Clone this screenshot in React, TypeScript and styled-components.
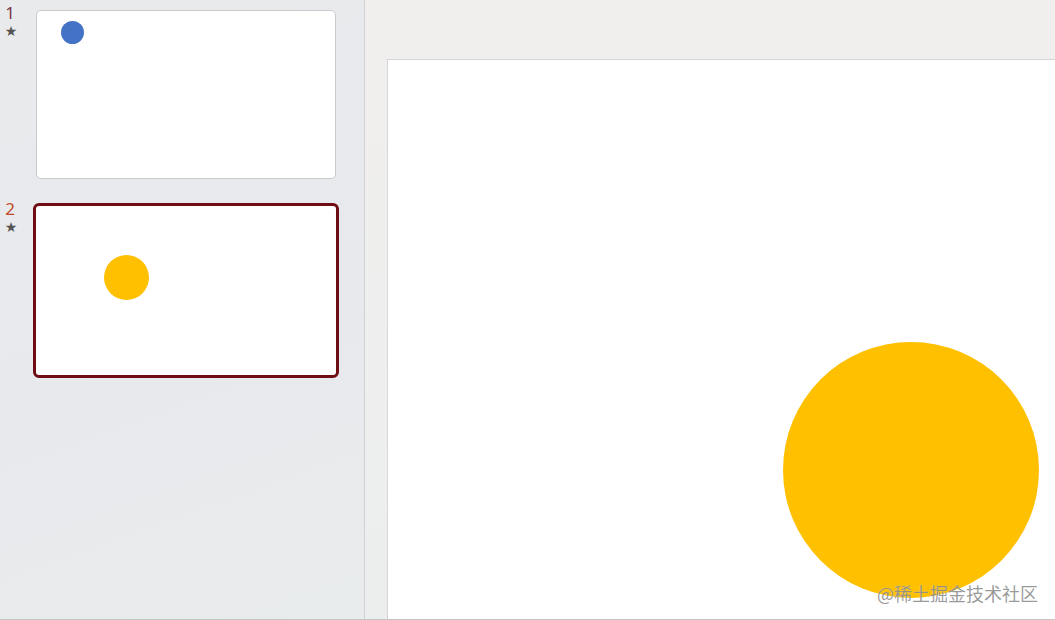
import styled, { createGlobalStyle } from "styled-components";

const GlobalStyle = createGlobalStyle`
  html, body {
    margin: 0;
    padding: 0;
    width: 1055px;
    height: 620px;
    overflow: hidden;
    font-family: "Noto Sans", "Open Sans", sans-serif;
  }
`;

const slides = [
  { id: 1, circle: { x: 35, y: 21, r: 11.5, color: "#4472c4" } },
  { id: 2, circle: { x: 90, y: 71, r: 22.5, color: "#ffc000" } },
];

const App = () => {
  const current = 2;
  return (
    <>
      <GlobalStyle />
      <Window>
        <Panel>
          {slides.map((s) => (
            <SlideRow key={s.id}>
              <Meta>
                <SlideNumber $active={s.id === current}>{s.id}</SlideNumber>
                <Star>★</Star>
              </Meta>
              <Thumb $active={s.id === current}>
                <Dot
                  $x={s.circle.x}
                  $y={s.circle.y}
                  $r={s.circle.r}
                  $color={s.circle.color}
                />
              </Thumb>
            </SlideRow>
          ))}
        </Panel>
        <Stage>
          <Slide>
            <BigCircle />
          </Slide>
        </Stage>
        <Watermark>@稀土掘金技术社区</Watermark>
      </Window>
    </>
  );
};

export default App;

const Window = styled.div`
  position: relative;
  display: flex;
  width: 1055px;
  height: 620px;
  box-sizing: border-box;
  border-bottom: 1px solid #c4c4c4;
  overflow: hidden;
`;

const Panel = styled.div`
  display: flex;
  flex-direction: column;
  gap: 21px;
  width: 365px;
  padding-top: 7px;
  box-sizing: border-box;
  background: linear-gradient(160deg, #e8eaec 0%, #e8e9ed 60%, #e9ecec 100%);
  border-right: 1px solid #cfd1d3;
`;

const SlideRow = styled.div`
  display: flex;
  align-items: flex-start;
`;

const Meta = styled.div`
  display: flex;
  flex-direction: column;
  align-items: center;
  width: 22px;
  margin-right: 11px;
`;

const SlideNumber = styled.span<{ $active: boolean }>`
  font-size: 17px;
  line-height: 18px;
  margin-top: -3px;
  padding-right: 2px;
  color: ${(p) => (p.$active ? "#c24a2c" : "#7a3448")};
`;

const Star = styled.span`
  font-family: "DejaVu Sans", sans-serif;
  font-size: 14px;
  line-height: 14px;
  margin-top: 2px;
  color: #555;
`;

const Thumb = styled.div<{ $active: boolean }>`
  position: relative;
  box-sizing: border-box;
  background: #fff;
  width: ${(p) => (p.$active ? 306 : 300)}px;
  height: ${(p) => (p.$active ? 175 : 169)}px;
  margin: ${(p) => (p.$active ? 0 : 3)}px;
  border: ${(p) => (p.$active ? "3px solid #6e0d14" : "1px solid #c9cacc")};
  border-radius: ${(p) => (p.$active ? 6 : 5)}px;
`;

const Dot = styled.div<{ $x: number; $y: number; $r: number; $color: string }>`
  position: absolute;
  left: ${(p) => p.$x - p.$r}px;
  top: ${(p) => p.$y - p.$r}px;
  width: ${(p) => p.$r * 2}px;
  height: ${(p) => p.$r * 2}px;
  border-radius: 50%;
  background: ${(p) => p.$color};
`;

const Stage = styled.div`
  flex: 1;
  display: flex;
  padding: 59px 0 0 22px;
  background: linear-gradient(180deg, #f1efee 0%, #eceeee 100%);
`;

const Slide = styled.div`
  position: relative;
  flex: 1;
  background: #fff;
  border-top: 1px solid #d6d6d6;
  border-left: 1px solid #d6d6d6;
`;

const BigCircle = styled.div`
  position: absolute;
  left: 395px;
  top: 282px;
  width: 256px;
  height: 256px;
  border-radius: 50%;
  background: #ffc000;
`;

const Watermark = styled.div`
  position: absolute;
  right: 17px;
  bottom: 15px;
  font-family: "Noto Sans CJK SC", sans-serif;
  font-size: 18px;
  line-height: 22px;
  color: rgba(120, 120, 120, 0.75);
  text-shadow: 0 0 1px rgba(255, 255, 255, 0.6);
`;
